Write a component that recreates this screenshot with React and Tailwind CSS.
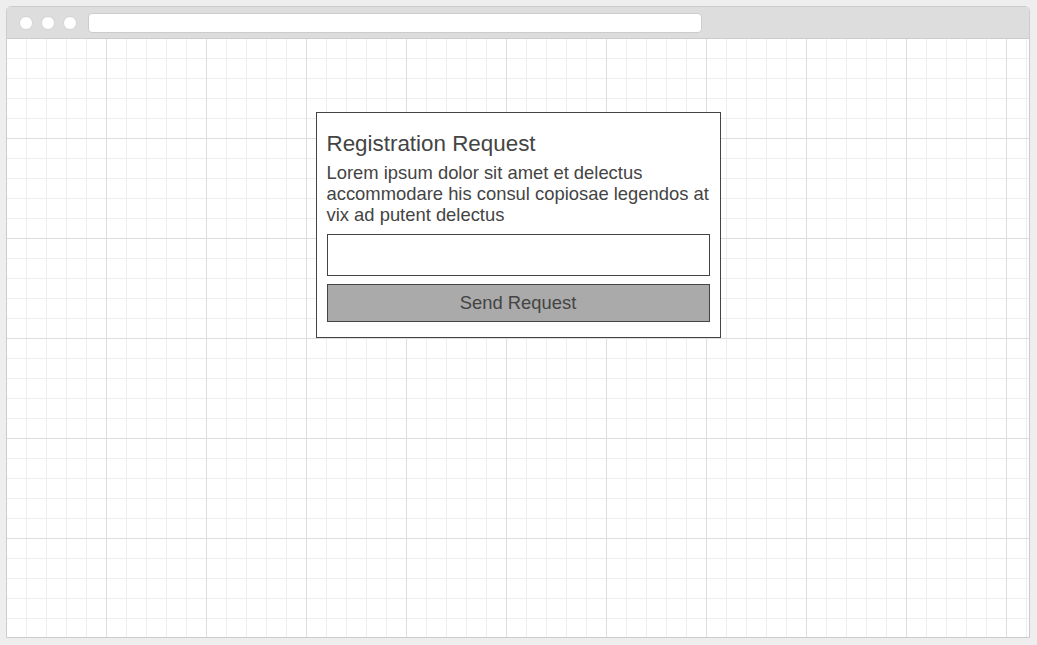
import React from 'react';

const App = () => {
  return (
    <div className="w-[1037px] h-[645px] bg-[#eeeeee] pt-[6px] pl-[6px] font-['Liberation_Sans',Arial,sans-serif]">
      <div className="w-[1024px] h-[632px] flex flex-col border border-[#cccccc] rounded-t-[5px] overflow-hidden bg-white">
        <div className="h-[32px] shrink-0 bg-[#dddddd] border-b border-[#cccccc] flex items-center pl-[12px] gap-[8px]">
          <span className="w-[14px] h-[14px] rounded-full bg-white border border-[#d4d4d4]" />
          <span className="w-[14px] h-[14px] rounded-full bg-white border border-[#d4d4d4]" />
          <span className="w-[14px] h-[14px] rounded-full bg-white border border-[#d4d4d4]" />
          <div className="ml-[3px] w-[614px] h-[20px] bg-white border border-[#cccccc] rounded-[4px]" />
        </div>
        <div className="flex-1 flex justify-center items-start pt-[73px] bg-white bg-[linear-gradient(to_right,transparent_99px,#dddddd_99px),linear-gradient(to_bottom,transparent_99px,#dddddd_99px),linear-gradient(to_right,transparent_19px,#eeeeee_19px),linear-gradient(to_bottom,transparent_19px,#eeeeee_19px)] bg-size-[100px_100px,100px_100px,20px_20px,20px_20px]">
          <div className="w-[405px] bg-white border border-[#444444] px-[10px] pt-[19px] pb-[15px] text-[#444444]">
            <h1 className="text-[22.4px] leading-[24px]">Registration Request</h1>
            <p className="mt-[6px] text-[18.4px] leading-[21px]">
              Lorem ipsum dolor sit amet et delectus accommodare his consul copiosae legendos at vix ad putent delectus
            </p>
            <input
              type="text"
              className="mt-[9px] block w-full h-[42px] border border-[#444444] bg-white outline-none px-2"
            />
            <button className="mt-[8px] block w-full h-[38px] bg-[#aaaaaa] border border-[#444444] text-[18.4px] text-[#444444]">
              Send Request
            </button>
          </div>
        </div>
      </div>
    </div>
  );
};

export default App;
